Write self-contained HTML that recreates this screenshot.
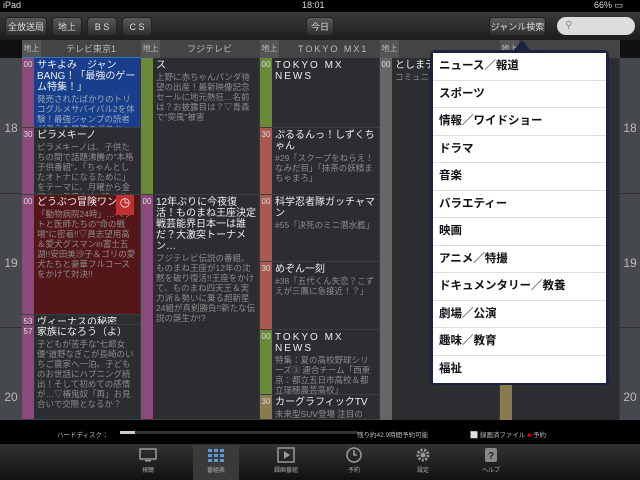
<!DOCTYPE html><html><head><meta charset="utf-8"><style>
*{margin:0;padding:0;box-sizing:border-box}
body{width:640px;height:480px;background:#000;position:relative;overflow:hidden;font-family:"Liberation Sans","Noto Sans CJK JP",sans-serif;color:#ddd}
.a{position:absolute}
.btn{position:absolute;top:17px;height:19px;border-radius:4px;background:linear-gradient(#5a5a5a,#2e2e2e);color:#ddd;font-size:9px;text-align:center;line-height:19px;border:1px solid #222}
.hdr{position:absolute;top:40px;height:18px;background:#444;font-size:9px;color:#bbb;line-height:18px}
.hdr b{position:absolute;left:0;top:0;width:19px;height:18px;background:#555;font-weight:normal;text-align:center;font-size:8px}
.col{position:absolute;top:58px;height:362px;background:#2b2d31;border-right:1px solid #3a3a3a}
.p{position:absolute;left:0;right:0;border-bottom:1px solid #3e3e42;overflow:hidden}
.p .bar{position:absolute;left:0;top:0;bottom:0;width:12px;font-size:8px;color:#ddd;text-align:center;padding-top:2px}
.p .t{position:absolute;left:15px;right:3px;top:2px;font-size:10px;color:#eee;line-height:11px}
.p .d{font-size:8.5px;color:#8c8c8c;line-height:10px;margin-top:1px}
.hr{position:absolute;font-size:12px;color:#bbb;width:20px;text-align:center}
.pop{position:absolute;left:430px;top:50px;width:179px;height:335px;background:#1a2440;border-radius:5px;padding:3px}
.pop div{height:27.5px;background:#fff;border-bottom:1px solid #ddd;font-size:11.5px;font-weight:600;color:#111;line-height:27px;padding-left:6px}
.tab{position:absolute;top:447px;width:38px;text-align:center;font-size:6px;color:#aaa}
.tab svg{display:block;margin:0 auto 2px}
</style></head><body>
<div class="a" style="left:0;top:0;width:640px;height:12px;background:#000;font-size:9px;color:#ddd">
<span class="a" style="left:3px;top:0">iPad</span><span class="a" style="left:302px;top:0">18:01</span><span class="a" style="left:594px;top:0">66% ▭</span></div>
<div class="a" style="left:0;top:12px;width:640px;height:28px;background:linear-gradient(#3a3a3a,#1e1e1e)"></div>
<div class="btn" style="left:5px;width:42px">全放送局</div>
<div class="btn" style="left:52px;width:30px">地上</div>
<div class="btn" style="left:87px;width:30px">B S</div>
<div class="btn" style="left:122px;width:30px">C S</div>
<div class="btn" style="left:306px;width:28px">今日</div>
<div class="btn" style="left:489px;width:57px">ジャンル検索</div>
<div class="a" style="left:557px;top:17px;width:78px;height:18px;border-radius:9px;background:#ddd;color:#888;font-size:10px;padding-left:8px;line-height:18px">⚲</div>
<div class="a" style="left:0;top:40px;width:640px;height:18px;background:#111"></div>
<div class="hdr" style="left:22px;width:119px"><b>地上</b><span style="margin-left:44px">テレビ東京1</span></div>
<div class="hdr" style="left:141px;width:119px"><b>地上</b><span style="margin-left:46px">フジテレビ</span></div>
<div class="hdr" style="left:260px;width:120px"><b>地上</b><span style="margin-left:38px;letter-spacing:2px">TOKYO MX1</span></div>
<div class="hdr" style="left:380px;width:120px"><b>地上</b></div>
<div class="hdr" style="left:500px;width:120px"><b>地上</b></div>
<div class="a" style="left:22px;top:57px;width:119px;height:2px;background:#2a7ad0"></div>
<div class="a" style="left:0;top:58px;width:22px;height:362px;background:#45484c"></div>
<div class="a" style="left:620px;top:58px;width:20px;height:362px;background:#45484c"></div>
<div class="a" style="left:0;top:193px;width:22px;height:1px;background:#333"></div>
<div class="a" style="left:0;top:327px;width:22px;height:1px;background:#333"></div>
<div class="a" style="left:620px;top:193px;width:20px;height:1px;background:#333"></div>
<div class="a" style="left:620px;top:327px;width:20px;height:1px;background:#333"></div>
<div class="hr" style="left:1px;top:121px">18</div><div class="hr" style="left:1px;top:256px">19</div><div class="hr" style="left:1px;top:390px">20</div>
<div class="hr" style="left:620px;top:121px">18</div><div class="hr" style="left:620px;top:256px">19</div><div class="hr" style="left:620px;top:390px">20</div>
<div class="col" style="left:22px;width:119px">
<div class="p" style="top:0;height:70px;background:#183e8c"><div class="bar" style="background:#8a4a7a">00</div><div class="t">サキよみ　ジャンBANG！「最強のゲーム特集！」<div class="d" style="color:#9ab">発売されたばかりのトリコグルメサバイバル2を体験！最強ジャンプの読者が考えた最強のボスキャラ…</div></div></div>
<div class="p" style="top:70px;height:67px"><div class="bar" style="background:#8a4a7a">30</div><div class="t">ピラメキーノ<div class="d">ピラメキーノは、子供たちの間で話題沸騰の"本格子供番組"。「ちゃんとしたオトナになるために」をテーマに、月曜から金曜まで毎日夕方6時30分から…</div></div></div>
<div class="p" style="top:137px;height:120px;background:#531719"><div class="bar" style="background:#8a4a7a">00</div><div class="t">どうぶつ冒険ワンダ<div class="d">「動物病院24時」…ペットと医師たちの"命の戦場"に密着!!▽員志望用高＆愛犬グスマンin富士五湖!!安田美沙子＆ゴリの愛犬たちと豪華フルコースをかけて対決!!</div></div><div class="a" style="right:6px;top:0;width:18px;height:20px;background:#c03030;color:#fff;font-size:12px;text-align:center">◷</div></div>
<div class="p" style="top:257px;height:10px"><div class="bar" style="background:#8a4a7a">53</div><div class="t">ヴィーナスの秘密</div></div>
<div class="p" style="top:267px;height:95px"><div class="bar" style="background:#8a4a7a">57</div><div class="t">家族になろう（よ）<div class="d">子どもが苦手な"七郎女優"道野なぎこが長崎のいちご農家へ一泊。子どものお世話にハプニング続出！そして初めての感情が…▽椿鬼奴「再」お見合いで交際となるか？</div></div></div>
</div>
<div class="col" style="left:141px;width:119px">
<div class="p" style="top:0;height:137px"><div class="bar" style="background:#6a8a3a"></div><div class="t">ス<div class="d">上野に赤ちゃんパンダ待望の出産！最新映像記念セールに地元熱狂…名前は？お披露目は？▽青森で"突風"被害</div></div></div>
<div class="p" style="top:137px;height:225px"><div class="bar" style="background:#8a4a7a">00</div><div class="t">12年ぶりに今夜復活！ものまね王座決定戦芸能界日本一は誰だ？大激突トーナメン…<div class="d">フジテレビ伝説の番組、ものまね王座が12年の沈黙を破り復活!!王座をかけて、ものまね四天王＆実力派＆勢いに乗る超新星24組が真剣勝負!!新たな伝説の誕生か!?</div></div></div>
</div>
<div class="col" style="left:260px;width:120px">
<div class="p" style="top:0;height:70px"><div class="bar" style="background:#6a8a3a">00</div><div class="t" style="letter-spacing:2px">TOKYO MX NEWS</div></div>
<div class="p" style="top:70px;height:67px"><div class="bar" style="background:#a85a50">30</div><div class="t">ぷるるんっ！しずくちゃん<div class="d">#29「スクープをねらえ！なみだ目」「抹茶の妖精まちゃまろ」</div></div></div>
<div class="p" style="top:137px;height:67px"><div class="bar" style="background:#a85a50">00</div><div class="t">科学忍者隊ガッチャマン<div class="d">#55「決死のミニ潜水艦」</div></div></div>
<div class="p" style="top:204px;height:68px"><div class="bar" style="background:#a85a50">30</div><div class="t">めぞん一刻<div class="d">#38「五代くん失恋？こずえが三鷹に急接近！？」</div></div></div>
<div class="p" style="top:272px;height:65px"><div class="bar" style="background:#6a8a3a">00</div><div class="t" style="letter-spacing:2px">TOKYO MX NEWS<div class="d" style="letter-spacing:0">特集：夏の高校野球シリーズ③ 連合チーム「西東京：都立五日市高校＆都立瑞穂農芸高校」</div></div></div>
<div class="p" style="top:337px;height:25px"><div class="bar" style="background:#8a7a50">30</div><div class="t">カーグラフィックTV<div class="d">未来型SUV登場 注目の</div></div></div>
</div>
<div class="col" style="left:380px;width:120px"><div class="p" style="top:0;height:362px;border:none"><div class="bar" style="background:#666">00</div><div class="t">としまテ<div class="d">コミュニ</div></div></div></div>
<div class="col" style="left:500px;width:120px"><div class="p" style="top:0;height:362px;border:none"><div class="bar" style="background:#8a7a50"></div></div></div>
<div class="a" style="left:514px;top:40px;width:0;height:0;border-left:8px solid transparent;border-right:8px solid transparent;border-bottom:10px solid #1a2440"></div>
<div class="pop"><div>ニュース／報道</div><div>スポーツ</div><div>情報／ワイドショー</div><div>ドラマ</div><div>音楽</div><div>バラエティー</div><div>映画</div><div>アニメ／特撮</div><div>ドキュメンタリー／教養</div><div>劇場／公演</div><div>趣味／教育</div><div style="border:none">福祉</div></div>
<div class="a" style="left:0;top:420px;width:640px;height:24px;background:#000;font-size:6.5px;color:#bbb">
<span class="a" style="left:57px;top:9px">ハードディスク：</span>
<div class="a" style="left:120px;top:11px;width:238px;height:3px;background:#333"><div style="width:15px;height:3px;background:#ccc"></div></div>
<span class="a" style="left:357px;top:9px">残り約42.9時間予約可能</span>
<span class="a" style="left:470px;top:9px">⬜ 録画済ファイル <span style="color:#d00">■</span> 予約</span></div>
<div class="a" style="left:0;top:444px;width:640px;height:36px;background:linear-gradient(#333,#111)"></div>
<div class="a" style="left:193px;top:445px;width:46px;height:35px;background:#3a3a3a"></div>
<div class="tab" style="left:129px"><svg width="18" height="16"><rect x="1" y="2" width="16" height="10" fill="none" stroke="#999" stroke-width="1.5"/><rect x="6" y="13" width="6" height="1.5" fill="#999"/></svg>視聴</div>
<div class="tab" style="left:197px"><svg width="18" height="16"><g fill="#5a9ad8"><rect x="1" y="2" width="4" height="3"/><rect x="7" y="2" width="4" height="3"/><rect x="13" y="2" width="4" height="3"/><rect x="1" y="7" width="4" height="3"/><rect x="7" y="7" width="4" height="3"/><rect x="13" y="7" width="4" height="3"/><rect x="1" y="12" width="4" height="3"/><rect x="7" y="12" width="4" height="3"/><rect x="13" y="12" width="4" height="3"/></g></svg>番組表</div>
<div class="tab" style="left:267px"><svg width="18" height="16"><rect x="1" y="1" width="16" height="14" fill="none" stroke="#999" stroke-width="1.5"/><path d="M7 4 L13 8 L7 12Z" fill="#999"/></svg>録画番組</div>
<div class="tab" style="left:335px"><svg width="18" height="16"><circle cx="9" cy="8" r="7" fill="none" stroke="#999" stroke-width="1.5"/><path d="M9 3 V8 H12" fill="none" stroke="#999" stroke-width="1.5"/></svg>予約</div>
<div class="tab" style="left:404px"><svg width="18" height="16"><circle cx="9" cy="8" r="5" fill="none" stroke="#999" stroke-width="3" stroke-dasharray="2 1.5"/><circle cx="9" cy="8" r="2.5" fill="#999"/></svg>設定</div>
<div class="tab" style="left:472px"><svg width="18" height="16"><rect x="3" y="1" width="12" height="14" rx="2" fill="#888"/><text x="9" y="12" font-size="10" font-weight="bold" fill="#222" text-anchor="middle" font-family="Liberation Sans">?</text></svg>ヘルプ</div>
</body></html>
